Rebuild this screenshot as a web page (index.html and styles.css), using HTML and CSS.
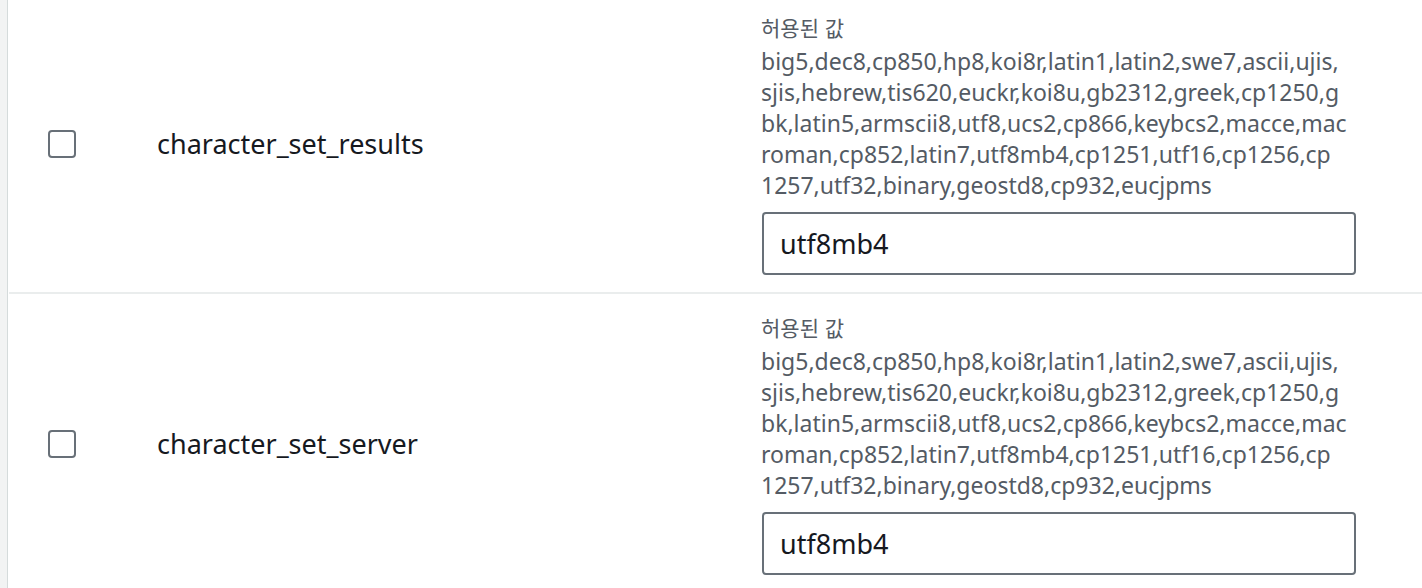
FILE: index.html
```html
<!DOCTYPE html>
<html lang="ko">
<head>
<meta charset="utf-8">
<title>Parameters</title>
<link rel="stylesheet" href="styles.css">
</head>
<body>
<div class="page">
  <div class="rail"></div>
  <div class="table">
    <div class="row">
      <div class="cell-check"><span class="checkbox"></span></div>
      <div class="cell-name">character_set_results</div>
      <div class="cell-value">
        <div class="allowed-label">허용된 값</div>
        <div class="allowed-values"><span class="line">big5,dec8,cp850,hp8,koi8r,latin1,latin2,swe7,ascii,ujis,</span><span class="line">sjis,hebrew,tis620,euckr,koi8u,gb2312,greek,cp1250,g</span><span class="line">bk,latin5,armscii8,utf8,ucs2,cp866,keybcs2,macce,mac</span><span class="line">roman,cp852,latin7,utf8mb4,cp1251,utf16,cp1256,cp</span><span class="line">1257,utf32,binary,geostd8,cp932,eucjpms</span></div>
        <div class="input">utf8mb4</div>
      </div>
    </div>
    <div class="row">
      <div class="cell-check"><span class="checkbox"></span></div>
      <div class="cell-name">character_set_server</div>
      <div class="cell-value">
        <div class="allowed-label">허용된 값</div>
        <div class="allowed-values"><span class="line">big5,dec8,cp850,hp8,koi8r,latin1,latin2,swe7,ascii,ujis,</span><span class="line">sjis,hebrew,tis620,euckr,koi8u,gb2312,greek,cp1250,g</span><span class="line">bk,latin5,armscii8,utf8,ucs2,cp866,keybcs2,macce,mac</span><span class="line">roman,cp852,latin7,utf8mb4,cp1251,utf16,cp1256,cp</span><span class="line">1257,utf32,binary,geostd8,cp932,eucjpms</span></div>
        <div class="input">utf8mb4</div>
      </div>
    </div>
  </div>
</div>
</body>
</html>
```
FILE: styles.css
```css
html, body {
  margin: 0;
  padding: 0;
  background: #ffffff;
  overflow: hidden;
}
body {
  font-family: "Noto Sans", "Noto Sans CJK KR", sans-serif;
  color: #16191f;
}
.page {
  display: flex;
  height: 588px;
  overflow: hidden;
}
.rail {
  width: 7px;
  flex: none;
  background: #f2f3f3;
  border-right: 1px solid #d5dbdb;
}
.table {
  flex: 1;
  margin-top: -6px;
  padding-left: 1px;
}
.row {
  display: flex;
  align-items: center;
  padding: 18px 0 17px;
  border-bottom: 2px solid #eaeded;
}
.cell-check {
  width: 148px;
  flex: none;
  padding-left: 39px;
  box-sizing: border-box;
  display: flex;
}
.checkbox {
  width: 24px;
  height: 24px;
  border: 2px solid #687078;
  border-radius: 4px;
  background: #fff;
}
.cell-name {
  width: 604px;
  flex: none;
  font-size: 27px;
  line-height: 32px;
}
.cell-value {
  width: 596px;
  flex: none;
}
.allowed-label {
  font-family: "Noto Sans CJK KR", sans-serif;
  font-size: 21px;
  line-height: 30px;
  color: #545b64;
  margin-bottom: 4px;
}
.allowed-values {
  font-size: 23px;
  line-height: 31px;
  color: #545b64;
}
.allowed-values .line {
  display: block;
  white-space: nowrap;
}
.input {
  margin-top: 11px;
  margin-left: 1px;
  height: 59px;
  width: 574px;
  border: 2px solid #687078;
  border-radius: 4px;
  padding-left: 16px;
  box-sizing: content-box;
  font-size: 27px;
  line-height: 59px;
  color: #16191f;
}
```
